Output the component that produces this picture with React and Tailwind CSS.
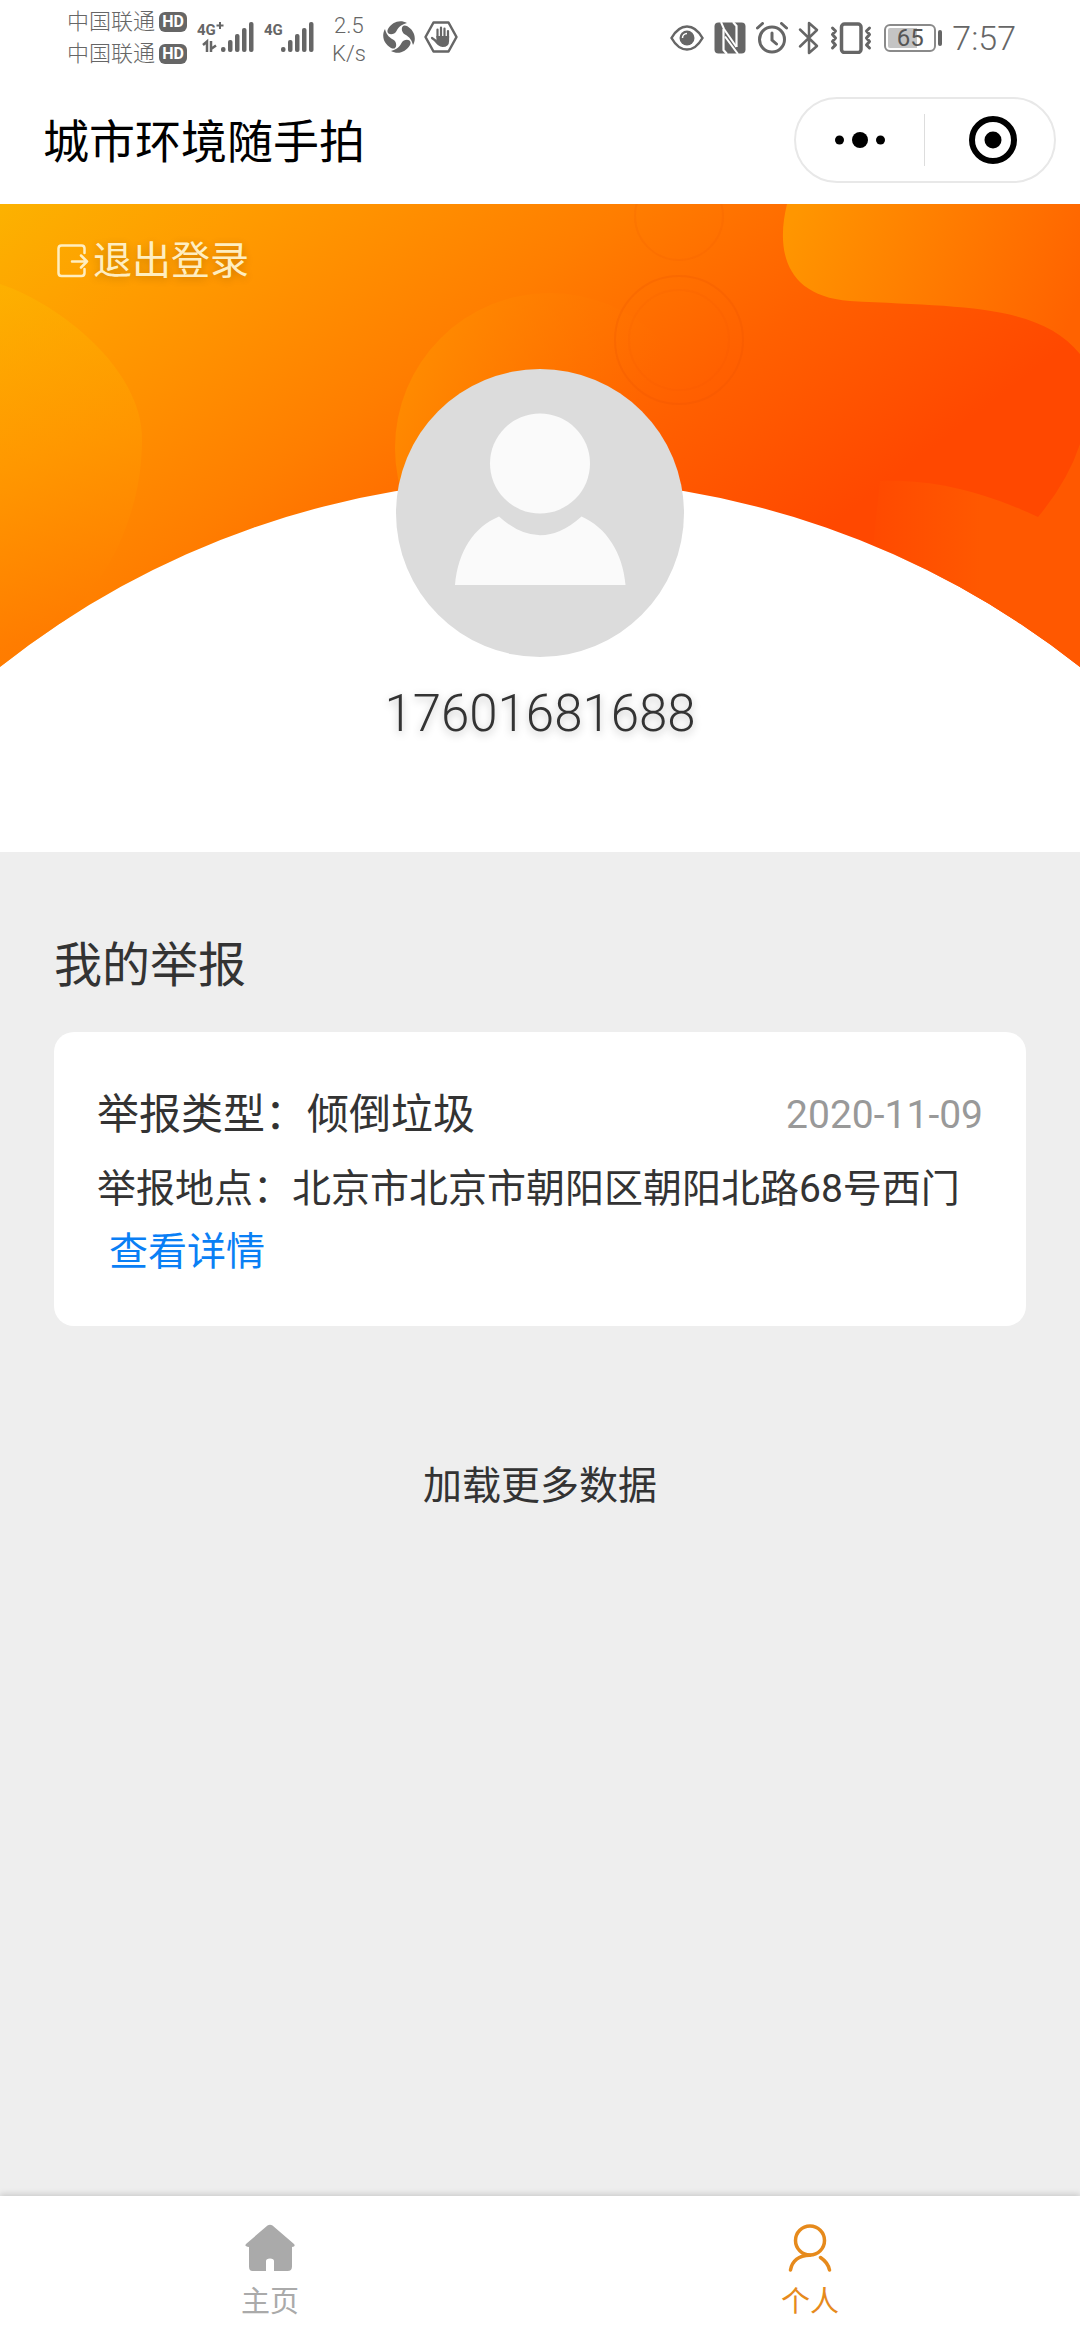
import { useState } from 'react'

const REPORTS = [
  { id: 1, type: '倾倒垃圾', date: '2020-11-09', place: '北京市北京市朝阳区朝阳北路68号西门' }
]

const TABS = [
  { key: 'home', label: '主页', icon: HomeIcon },
  { key: 'mine', label: '个人', icon: PersonIcon }
]

function Carrier() {
  return (
    <div className="flex items-center gap-1 h-8">
      <span className="text-[22px] leading-8 font-light">中国联通</span>
      <span className="w-7 h-5 rounded-md bg-[#666] text-white text-[16px] leading-5 font-bold text-center">HD</span>
    </div>
  )
}

function Bars() {
  return (
    <>
      <rect y="27" width="4.5" height="5" rx="2" />
      <rect x="7" y="20" width="4.5" height="12" rx="2" />
      <rect x="14" y="14" width="4.5" height="18" rx="2" />
      <rect x="21" y="8" width="4.5" height="24" rx="2" />
      <rect x="28" y="2" width="4.5" height="30" rx="2" />
    </>
  )
}

function SignalPlus() {
  return (
    <svg viewBox="0 0 57 34" className="w-[57px] h-[34px]" fill="#666">
      <text x="0" y="15" fontSize="15" fontWeight="700">4G</text>
      <path d="M23 2v7M19.5 5.5h7" stroke="#666" strokeWidth="2" />
      <path d="M6 25l4-3.5V32M14 21v11M14 29l5-3.5" fill="none" stroke="#666" strokeWidth="2.5" />
      <g transform="translate(24 0)">
        <Bars />
      </g>
    </svg>
  )
}

function Signal() {
  return (
    <svg viewBox="0 0 50 34" className="w-[50px] h-[34px]" fill="#666">
      <text x="0" y="15" fontSize="15" fontWeight="700">4G</text>
      <g transform="translate(17 0)">
        <Bars />
      </g>
    </svg>
  )
}

function FanIcon() {
  const blade = 'M6 9C10 2 18 -1 25 3C21 4 17 6 14.5 11C12 16 3 15 6 9Z'
  return (
    <svg viewBox="0 0 34 34" className="w-[34px] h-[34px]" fill="#666">
      <path d={blade} />
      <path d={blade} transform="rotate(90 17 17)" />
      <path d={blade} transform="rotate(180 17 17)" />
      <path d={blade} transform="rotate(270 17 17)" />
    </svg>
  )
}

function HandIcon() {
  return (
    <svg viewBox="0 0 34 34" className="w-[34px] h-[34px]" fill="none" stroke="#666">
      <path d="M9.5 2.5h15L32.5 17l-8 14.5h-15L1.5 17z" strokeWidth="2.5" strokeLinejoin="round" />
      <path d="M13.5 17V9.5M17 17V7.5M20.5 17V8.5M24 18v-7M12 21l-4-3" strokeWidth="2.2" strokeLinecap="round" />
      <path d="M12.4 16h12.7v5q0 6-6.5 6Q14 27 10 20.5l2.4.5z" fill="#666" stroke="none" />
    </svg>
  )
}

function EyeIcon() {
  return (
    <svg viewBox="0 0 34 28" className="w-[34px] h-7" fill="none" stroke="#666">
      <path d="M1.5 14Q8 2.5 17 2.5T32.5 14Q26 25.5 17 25.5T1.5 14Z" strokeWidth="2.5" />
      <circle cx="17" cy="14" r="7.5" fill="#666" stroke="none" />
      <path d="M12.5 14a4.5 4.5 0 0 1 4.5-4.5" stroke="#fff" strokeWidth="1.5" />
    </svg>
  )
}

function NfcIcon() {
  return (
    <svg viewBox="0 0 32 32" className="w-8 h-8">
      <rect x="0.5" y="0.5" width="31" height="31" rx="4" fill="#666" />
      <path d="M9.5 7V28L13 32M22.5 25V4L19 0" fill="none" stroke="#fff" strokeWidth="2.2" />
      <path d="M7 0l3 7 12.5 18M11 14.5L24 32" fill="none" stroke="#fff" strokeWidth="2" />
    </svg>
  )
}

function AlarmIcon() {
  return (
    <svg viewBox="0 0 32 32" className="w-8 h-8" fill="none" stroke="#666" strokeWidth="3" strokeLinecap="round">
      <circle cx="16" cy="17.5" r="12.5" />
      <path d="M16 11v7l4.5 4M1.5 6l5-4.5M30.5 6l-5-4.5" />
    </svg>
  )
}

function BluetoothIcon() {
  return (
    <svg viewBox="0 0 22 34" className="w-[22px] h-[34px]" fill="none" stroke="#666" strokeWidth="2.5" strokeLinecap="round" strokeLinejoin="round">
      <path d="M2 8.5L19 25l-8 7V2l8 7L2 25.5" />
    </svg>
  )
}

function VibrateIcon() {
  return (
    <svg viewBox="0 0 42 32" className="w-[42px] h-8" fill="none" stroke="#666" strokeLinejoin="round" strokeLinecap="round">
      <rect x="11.5" y="2" width="19.5" height="28.5" rx="3" strokeWidth="3.5" />
      <path d="M2.5 6l3 3-3 3.5 3 3.5-3 3.5 3 3.5-3 3M39.5 6l-3 3 3 3.5-3 3.5 3 3.5-3 3.5 3 3" strokeWidth="3" />
    </svg>
  )
}

function Battery() {
  return (
    <div className="flex items-center gap-0.5">
      <div className="flex w-[52px] h-7 p-0.5 rounded-md border-2 border-[#8a8a8a]">
        <div className="w-full rounded-xs bg-linear-to-r from-[#c4c4c4] from-65% to-white to-65% text-[24px] leading-5 text-center text-[#555]">65</div>
      </div>
      <div className="w-1 h-4 rounded-sm bg-[#666]" />
    </div>
  )
}

function StatusBar() {
  return (
    <div className="flex justify-between items-start pl-[67px] pr-16 h-[76px] text-[#666]">
      <div className="flex items-start">
        <div className="pt-1.5">
          <Carrier />
          <Carrier />
        </div>
        <div className="flex gap-2.5 pl-2.5 pt-5">
          <SignalPlus />
          <Signal />
        </div>
        <div className="pl-[18px] pt-3 text-[22px] leading-7 font-light text-center">
          <p>2.5</p>
          <p>K/s</p>
        </div>
        <div className="flex gap-2 pl-4 pt-5">
          <FanIcon />
          <HandIcon />
        </div>
      </div>
      <div className="flex items-center gap-2.5 h-[76px]">
        <EyeIcon />
        <NfcIcon />
        <AlarmIcon />
        <BluetoothIcon />
        <VibrateIcon />
        <div className="flex items-center gap-2.5 pl-0.5">
          <Battery />
          <span className="text-[34px] leading-8 font-light">7:57</span>
        </div>
      </div>
    </div>
  )
}

function TitleBar() {
  return (
    <header className="flex items-center justify-between h-32 pl-[43px] pr-6">
      <h1 className="pt-1 text-[46px] leading-[64px] text-black">城市环境随手拍</h1>
      <div className="flex items-center w-[262px] h-[86px] rounded-full border-2 border-[#e8e8e8]">
        <button aria-label="更多" className="w-1/2 flex justify-center">
          <svg viewBox="0 0 52 18" className="w-[52px] h-[18px]">
            <circle cx="5.5" cy="9" r="4.5" />
            <circle cx="26" cy="9" r="8" />
            <circle cx="46.5" cy="9" r="4.5" />
          </svg>
        </button>
        <span className="w-px h-[52px] bg-[#ddd]" />
        <button aria-label="关闭" className="w-1/2 flex justify-center pl-1.5">
          <svg viewBox="0 0 48 48" className="w-12 h-12">
            <circle cx="24" cy="24" r="21" fill="none" stroke="#000" strokeWidth="6" />
            <circle cx="24" cy="24" r="8.5" />
          </svg>
        </button>
      </div>
    </header>
  )
}

// 顶部橙色背景，底边为弧形
function HeroBackground() {
  return (
    <svg viewBox="0 0 1080 463" className="w-full col-start-1 row-start-1 self-start">
      <defs>
        <linearGradient id="base" gradientUnits="userSpaceOnUse" x1="0" y1="0" x2="460" y2="604">
          <stop offset="0" stopColor="#fcb200" />
          <stop offset="0.2" stopColor="#ff9c00" />
          <stop offset="0.5" stopColor="#ff7e00" />
          <stop offset="0.75" stopColor="#ff6000" />
          <stop offset="1" stopColor="#ff4800" />
        </linearGradient>
        <linearGradient id="left" gradientUnits="userSpaceOnUse" x1="0" y1="90" x2="90" y2="420">
          <stop offset="0" stopColor="#fdb400" />
          <stop offset="0.5" stopColor="#ff9a00" />
          <stop offset="1" stopColor="#ff7a00" />
        </linearGradient>
        <linearGradient id="halo" gradientUnits="userSpaceOnUse" x1="440" y1="110" x2="640" y2="200">
          <stop offset="0" stopColor="#ff8a00" />
          <stop offset="1" stopColor="#ff7000" stopOpacity="0" />
        </linearGradient>
        <linearGradient id="corner" gradientUnits="userSpaceOnUse" x1="790" y1="20" x2="1060" y2="140">
          <stop offset="0" stopColor="#ff9600" />
          <stop offset="1" stopColor="#ff6200" />
        </linearGradient>
        <linearGradient id="tail" gradientUnits="userSpaceOnUse" x1="860" y1="330" x2="980" y2="330">
          <stop offset="0" stopColor="#ff5800" stopOpacity="0" />
          <stop offset="1" stopColor="#ff5800" />
        </linearGradient>
        <clipPath id="arc">
          <path d="M0 0H1080V463A870 870 0 0 0 0 463Z" />
        </clipPath>
      </defs>
      <g clipPath="url(#arc)">
        <rect width="1080" height="463" fill="url(#base)" />
        <path d="M0 80C60 100 142 165 142 235C142 320 100 390 45 435L0 463Z" fill="url(#left)" fillOpacity="0.6" />
        <circle cx="550" cy="244" r="155" fill="url(#halo)" />
        <g fill="none" stroke="#e85000" strokeWidth="2">
          <circle cx="679" cy="136" r="64" strokeOpacity="0.2" />
          <circle cx="679" cy="136" r="50" strokeOpacity="0.08" />
          <circle cx="679" cy="12" r="44" strokeOpacity="0.12" />
        </g>
        <path d="M787 0C776 45 784 92 850 97C960 103 1040 100 1080 150V0Z" fill="url(#corner)" />
        <path d="M880 277C930 275 980 286 1038 313Q1068 277 1080 240V463H860Z" fill="url(#tail)" />
      </g>
    </svg>
  )
}

function Avatar() {
  return (
    <svg viewBox="0 0 288 288" className="w-72 h-72 mt-[83px] self-center">
      <circle cx="144" cy="144" r="144" fill="#dcdcdc" />
      <circle cx="144" cy="94.5" r="50" fill="#fafafa" />
      <path d="M59 216C62 182 78 158 103 147.5Q144 185 185.5 147.5C210 158 227 184 229.5 216Z" fill="#fafafa" />
    </svg>
  )
}

function LogoutIcon() {
  return (
    <svg viewBox="0 0 36 36" className="w-9 h-9" fill="none" stroke="currentColor" strokeWidth="2.5" strokeLinecap="round" strokeLinejoin="round">
      <path d="M28.5 10V5.5q0-3-3-3h-20q-3 0-3 3V30q0 3 3 3h20q3 0 3-3v-4M16 18.5h15M25 12.5l6 6-6 6" />
    </svg>
  )
}

function HomeIcon() {
  return (
    <svg viewBox="0 0 50 48" className="w-[50px] h-12" fill="currentColor">
      <path d="M22.5 1.5Q25 0 27.5 1.5L49 20Q51 22.5 47 23V42.5Q47 47 42.5 47H29V37Q29 34.5 25 34.5T21 37V47H7.5Q4 47 4 42.5V23Q-1 22.5 1 20Z" />
    </svg>
  )
}

function PersonIcon() {
  return (
    <svg viewBox="0 0 44 48" className="w-11 h-12" fill="none" stroke="currentColor" strokeWidth="3.5" strokeLinecap="round">
      <circle cx="22" cy="16.5" r="14.5" />
      <path d="M2.5 46C4 37 11 31 22 31.2M32.5 33.5Q40 38.5 41.5 46" />
    </svg>
  )
}

export default function App() {
  const [tab, setTab] = useState('mine')

  return (
    <div className="min-h-screen flex flex-col bg-white text-[#333] font-['Roboto','Noto_Sans_CJK_SC',sans-serif]">
      <StatusBar />
      <TitleBar />

      <section className="grid">
        <HeroBackground />
        <div className="col-start-1 row-start-1 flex flex-col pt-8 pb-[108px]">
          <button className="self-start flex items-center ml-14 h-[50px] gap-px text-[39px] leading-[50px] text-[#ffeec0] text-shadow-[0_2px_8px_rgb(0_0_0/0.2)]">
            <LogoutIcon />
            退出登录
          </button>
          <Avatar />
          <p className="mt-[27px] text-center text-[51px] leading-[60px] font-light text-shadow-[0_3px_8px_rgb(0_0_0/0.25)]">
            17601681688
          </p>
        </div>
      </section>

      <main className="flex-1 flex flex-col bg-[#eee] px-[54px] pt-[82px]">
        <h2 className="text-[48px] leading-[64px]">我的举报</h2>
        {REPORTS.map(report => (
          <article key={report.id} className="mt-[34px] px-[43px] pt-[51px] pb-[42px] bg-white rounded-[20px]">
            <div className="flex justify-between items-center leading-[64px]">
              <h3 className="text-[42px]">举报类型：{report.type}</h3>
              <time className="text-[39px] text-[#999]">{report.date}</time>
            </div>
            <p className="mt-[11px] text-[39px] leading-[63px]">
              举报地点：{report.place}
              <a href="#detail" className="inline-block pl-3 text-[#0a7ff5]">查看详情</a>
            </p>
          </article>
        ))}
        <button className="self-center mt-32 text-[39px] leading-[64px]">加载更多数据</button>
      </main>

      <nav className="flex bg-white pt-7 pb-4 shadow-[0_-2px_6px_rgb(0_0_0/0.15)]">
        {TABS.map(({ key, label, icon: Icon }) => (
          <button
            key={key}
            onClick={() => setTab(key)}
            className={`flex-1 flex flex-col items-center gap-2 ${tab === key ? 'text-[#e68a1c]' : 'text-[#aaa]'}`}
          >
            <Icon />
            <span className="text-[29px] leading-[44px]">{label}</span>
          </button>
        ))}
      </nav>
    </div>
  )
}
